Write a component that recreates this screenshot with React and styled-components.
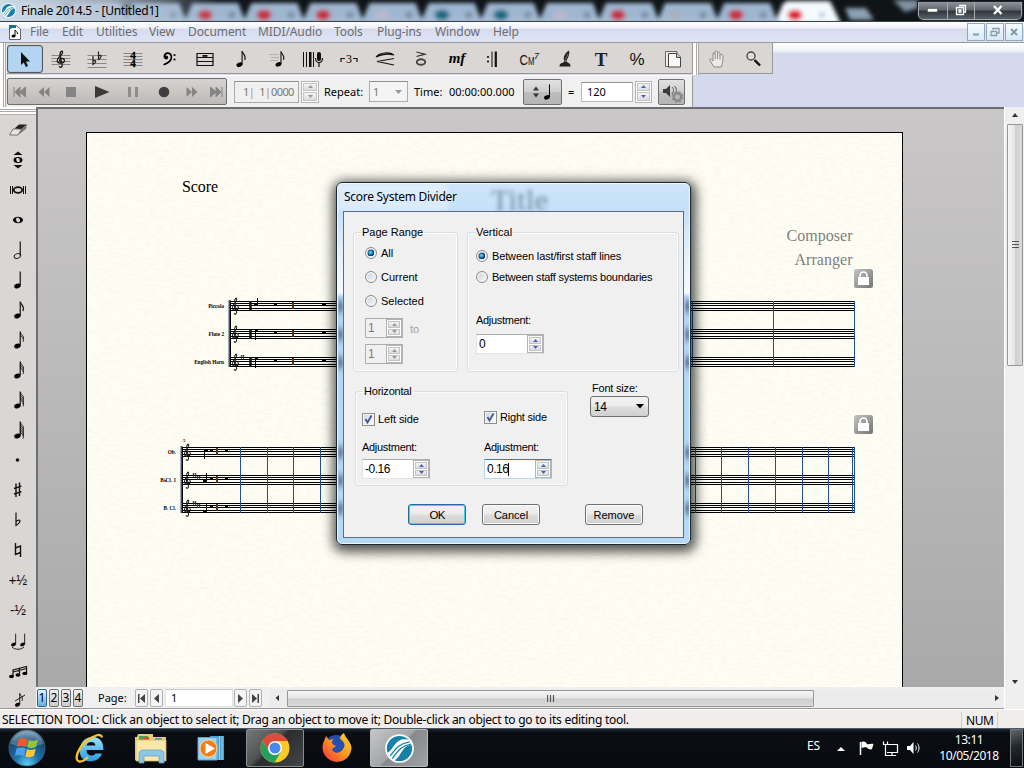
import React from 'react';
import styled, { createGlobalStyle, css } from 'styled-components';

const UI = "'Noto Sans', 'Open Sans', sans-serif";
const SANS = "'Liberation Sans', Arial, sans-serif";
const SERIF = "'Liberation Serif', 'Times New Roman', serif";

const Global = createGlobalStyle`
  * { box-sizing: border-box; }
  body { margin: 0; background: #000; overflow: hidden; }
  svg { display: block; flex: none; }
`;

const Screen = styled.div`
  position: relative;
  width: 1024px;
  height: 768px;
  display: flex;
  flex-direction: column;
  overflow: hidden;
  font-family: ${UI};
  font-size: 12px;
  color: #000;
  background: #f0f0f0;
`;

const Label = styled.span`
  white-space: pre;
  flex: none;
  font-family: ${(p) => p.$font || UI};
  font-size: ${(p) => p.$size || 12}px;
  line-height: ${(p) => p.$lh || 16}px;
  letter-spacing: ${(p) => p.$ls || 0}px;
  color: ${(p) => p.$color || '#000'};
  width: ${(p) => (p.$w ? p.$w + 'px' : 'auto')};
  margin-left: ${(p) => p.$ml || 0}px;
  margin-top: ${(p) => p.$mt || 0}px;
`;

/* ---------- title bar ---------- */
const TitleBar = styled.header`
  position: relative;
  height: 22px;
  flex: none;
  display: flex;
  align-items: center;
  padding-left: 1px;
  overflow: hidden;
  border-bottom: 1px solid #3b4147;
`;
const Backdrop = styled.div`
  position: absolute;
  inset: 0;
`;
const TitleContent = styled.div`
  position: relative;
  display: flex;
  align-items: center;
  gap: 5px;
  width: 100%;
`;
const Caption = styled.div`
  margin-left: auto;
  margin-right: 2px;
  align-self: flex-start;
  display: flex;
  height: 18px;
  border: 1px solid #a3a9af;
  border-top: 0;
  border-radius: 0 0 5px 5px;
  background: linear-gradient(#8d949b 0, #60666d 8px, #30363c 9px, #596067 17px);
  outline: 1px solid #20262c;
`;
const CaptionBtn = styled.div`
  width: ${(p) => p.$w}px;
  display: flex;
  align-items: center;
  justify-content: center;
  & + & { border-left: 1px solid #a3a9af; }
`;

/* ---------- menu ---------- */
const MenuBar = styled.nav`
  height: 20px;
  flex: none;
  display: flex;
  align-items: center;
  padding-left: 8px;
  background: linear-gradient(#fdfdff 0, #f1f3fa 6px, #d6dbef 7px, #e0e5f5 20px);
`;
const MdiButtons = styled.div`
  margin-left: auto;
  margin-right: 1px;
  display: flex;
  gap: 1px;
`;
const MdiBtn = styled.div`
  width: 18px;
  height: 18px;
  border: 1px solid #91a7bd;
  background: linear-gradient(#f6fbff, #d8eaf6);
  display: flex;
  align-items: center;
  justify-content: center;
`;

/* ---------- toolbars ---------- */
const Rebar = styled.div`
  height: 65px;
  flex: none;
  border-top: 1px solid #9a9a9a;
  background: linear-gradient(#ffffff 0, #f2f4fa 7px, #e9ecf7 9px, #d4d9ed 10px);
`;
const Band = styled.div`
  display: flex;
  height: ${(p) => p.$h}px;
  align-items: stretch;
`;
const Grip = styled.div`
  width: ${(p) => p.$w || 7}px;
  flex: none;
  background: linear-gradient(90deg, #fff 0 3px, #a8a8a8 3px 4px, #fff 4px 5px, #a8a8a8 5px 6px, #e9e8e7 6px);
`;
const ToolStrip = styled.div`
  display: flex;
  height: 31px;
  width: ${(p) => p.$w}px;
  padding: 2px 0;
  background: #dad6d3;
  border-bottom: 1px solid #999;
  border-right: 1px solid #999;
`;
const ToolBtn = styled.div`
  width: ${(p) => p.$w || 36}px;
  height: 28px;
  flex: none;
  display: flex;
  align-items: center;
  justify-content: center;
  border-radius: 3px;
  ${(p) => p.$on && css`
    background: #b3d4f2;
    border: 1px solid #555;
    box-shadow: inset 0 0 1px #666;
  `}
`;
const PlayStrip = styled.div`
  display: flex;
  align-items: center;
  width: 686px;
  height: 32px;
  background: #f0f0f0;
  border-right: 1px solid #999;
  border-top: 1px solid #fff;
`;
const Transport = styled.div`
  display: flex;
  align-items: center;
  width: 220px;
  height: 27px;
  border: 1px solid #6d6d6d;
  border-radius: 2px;
  background: linear-gradient(#d6d3d1, #bdb9b7);
`;
const Box = styled.div`
  display: flex;
  align-items: center;
  width: ${(p) => p.$w}px;
  height: ${(p) => p.$h}px;
  margin-left: ${(p) => p.$ml || 0}px;
  padding-left: ${(p) => p.$pl ?? 3}px;
  background: ${(p) => p.$bg || '#fff'};
  border: 1px solid ${(p) => p.$bc || '#b5b8bd'};
  border-top-color: ${(p) => p.$tc || '#8f949a'};
  flex: none;
`;
const DarkBtn = styled.div`
  display: flex;
  align-items: center;
  justify-content: center;
  width: ${(p) => p.$w}px;
  height: 26px;
  margin-left: ${(p) => p.$ml}px;
  border: 1px solid #707070;
  border-radius: 2px;
  background: linear-gradient(#e2e2e2, #cfcfcf 48%, #bdbdbd 52%, #b5b5b5);
`;
const SpinBox = styled.div`
  display: flex;
  flex-direction: column;
  gap: 1px;
  width: ${(p) => p.$w || 17}px;
  height: ${(p) => p.$h || 20}px;
  margin-left: ${(p) => p.$ml || 0}px;
  padding: 1px;
  border: 1px solid #b4b4b4;
  background: #fff;
  flex: none;
`;
const SpinHalf = styled.div`
  flex: 1;
  border: 1px solid #c3c3c3;
  background: linear-gradient(#f4f4f4, #dcdcdc);
  display: flex;
  align-items: center;
  justify-content: center;
`;
function Spin({ color = '#4a62b8', ...rest }) {
  return (
    <SpinBox {...rest}>
      <SpinHalf><svg width="5" height="3"><path d="M0 3L2.5 0L5 3z" fill={color} /></svg></SpinHalf>
      <SpinHalf><svg width="5" height="3"><path d="M0 0L2.5 3L5 0z" fill={color} /></svg></SpinHalf>
    </SpinBox>
  );
}

/* ---------- workspace ---------- */
const Workspace = styled.div`
  display: flex;
  height: 602px;
  flex: none;
`;
const Palette = styled.aside`
  width: 36px;
  height: 602px;
  flex: none;
  overflow: hidden;
  background: #dad6d3;
  border-bottom: 1px solid #999;
`;
const PaletteGrip = styled.div`
  height: 8px;
  background: linear-gradient(#fff 0 2px, #a8a8a8 2px 3px, #fff 3px 4px, #a8a8a8 4px 5px, #fff 5px 7px, #b5b5b5 7px);
`;
const PaletteCell = styled.div`
  height: 30px;
  padding-right: 1px;
  display: flex;
  align-items: center;
  justify-content: center;
`;
const DocColumn = styled.div`
  width: 968px;
  flex: none;
  display: flex;
  flex-direction: column;
`;
const Canvas = styled.main`
  position: relative;
  height: 580px;
  overflow: hidden;
  border-left: 2px solid #6e6e6e;
  border-top: 2px solid #6e6e6e;
  background: linear-gradient(#c9c7c8, #aaa9aa);
`;
const Paper = styled.div`
  position: absolute;
  left: 48px;
  top: 23px;
  width: 817px;
  height: 560px;
  border: 1px solid #000;
  background: #fefef5;
`;
const ScoreArt = styled.svg`
  position: absolute;
  left: -87px;
  top: -133px;
`;
const BottomBar = styled.div`
  height: 22px;
  display: flex;
  align-items: center;
  padding: 1px 0 0 1px;
  background: #f0f0f0;
  border-bottom: 1px solid #999;
  & > * { flex-shrink: 0; }
`;
const LayerBtn = styled.div`
  width: 10px;
  height: 18px;
  margin-right: 2px;
  border: 1px solid ${(p) => (p.$on ? '#2c628b' : '#707070')};
  border-radius: 2px;
  background: ${(p) => (p.$on ? 'linear-gradient(#e5f4fc, #98d1ef 50%, #68b3db)' : 'linear-gradient(#f2f2f2, #ddd 50%, #cfcfcf)')};
  font-size: 12px;
  line-height: 16px;
  text-align: center;
  display: flex;
  justify-content: center;
`;
const NavBtn = styled.div`
  width: 13px;
  height: 18px;
  margin-left: ${(p) => p.$ml || 0}px;
  margin-right: ${(p) => p.$mr || 2}px;
  border: 1px solid #adb2b5;
  border-radius: 2px;
  background: #f4f4f4;
  display: flex;
  align-items: center;
  justify-content: center;
`;
const HScroll = styled.div`
  width: 734px;
  height: 18px;
  display: flex;
  align-items: center;
  background: #ececec;
`;
const HThumb = styled.div`
  width: 527px;
  height: 17px;
  margin-left: 6px;
  border: 1px solid #979797;
  border-radius: 1px;
  background: linear-gradient(#f5f5f5, #e6e6e6 48%, #cfcfcf 52%, #dadada);
  display: flex;
  align-items: center;
  justify-content: center;
`;
const VScroll = styled.div`
  width: 20px;
  height: 602px;
  padding: 5px 1px 24px 2px;
  background: #efefef;
  border-left: 1px solid #fff;
  display: flex;
  flex-direction: column;
  align-items: center;
`;
const VThumb = styled.div`
  width: 16px;
  height: 242px;
  margin-top: 6px;
  margin-bottom: auto;
  border: 1px solid #979797;
  border-radius: 1px;
  background: linear-gradient(90deg, #f5f5f5, #e6e6e6 48%, #cfcfcf 52%, #dadada);
  display: flex;
  align-items: center;
  justify-content: center;
`;
const StatusBar = styled.footer`
  height: 19px;
  flex: none;
  display: flex;
  align-items: center;
  padding: 2px 0 0 2px;
  background: #f1edec;
  border-top: 1px solid #fff;
`;
const StatusCell = styled.div`
  margin-left: auto;
  margin-right: 26px;
  width: 37px;
  padding-left: 4px;
  border-left: 1px solid #cfcbca;
  border-right: 1px solid #cfcbca;
`;

/* ---------- taskbar ---------- */
const Taskbar = styled.div`
  flex: none;
  height: 40px;
  display: flex;
  align-items: center;
  background: linear-gradient(#4b5a66 0 1px, #1d262d 1px, #0a0e13 5px, #070a10 100%);
`;
const Task = styled.div`
  width: ${(p) => p.$w || 62}px;
  height: 38px;
  flex: none;
  display: flex;
  align-items: center;
  justify-content: center;
  ${(p) => p.$state && css`
    border: 1px solid ${p.$state === 'active' ? '#b9bbbd' : '#8a8c8e'};
    border-radius: 2px;
    background: ${p.$state === 'active'
      ? 'linear-gradient(135deg, #c5c6c7 0%, #a3a4a6 48%, #88898b 50%, #9fa0a2 100%)'
      : 'linear-gradient(135deg, #77787a 0%, #515254 40%, #2b2c2e 48%, #454648 100%)'};
  `}
`;
const Tray = styled.div`
  margin-left: auto;
  display: flex;
  align-items: center;
  height: 40px;
`;
const Clock = styled.div`
  width: 70px;
  margin-left: 9px;
  display: flex;
  flex-direction: column;
  align-items: center;
`;
const ShowDesktop = styled.div`
  width: 13px;
  height: 38px;
  margin: 0 1px 0 6px;
  border: 1px solid #73777b;
  background: linear-gradient(160deg, #62676b, #23282d 45%, #0b0f13);
`;

/* ---------- dialog ---------- */
const Dialog = styled.section`
  position: absolute;
  left: 336px;
  top: 182px;
  width: 355px;
  height: 363px;
  padding: 0 6px 6px;
  border: 1px solid #1d2630;
  border-radius: 6px;
  background: linear-gradient(#cfe5f9 0, #c5e0f8 28px, #e6f2fc 75px, #f4f9fe 110px, #b4d6f6 114px, #b7d9f8 100%);
  box-shadow: inset 0 0 0 1px rgba(255,255,255,.75), 1px 3px 12px 4px rgba(0,0,0,.68);
`;
const FrameSmudges = styled.svg`
  position: absolute;
  left: 1px;
  top: 1px;
`;
const DialogTitle = styled.div`
  position: relative;
  height: 28px;
  padding-top: 5px;
  padding-left: 1px;
`;
const Client = styled.div`
  position: relative;
  width: 341px;
  height: 327px;
  border: 1px solid #5c6d80;
  background: #f0f0f0;
  padding: 20px 4px 0 9px;
  font-family: ${SANS};
`;
const Row = styled.div`
  display: flex;
  align-items: ${(p) => p.$align || 'flex-start'};
  margin-top: ${(p) => p.$mt || 0}px;
  padding-left: ${(p) => p.$pl || 0}px;
`;
const Group = styled.div`
  position: relative;
  width: ${(p) => p.$w}px;
  height: ${(p) => p.$h}px;
  margin-left: ${(p) => p.$ml || 0}px;
  padding: ${(p) => p.$pad};
  border: 1px solid #d5dfe5;
  border-radius: 3px;
  box-shadow: inset 0 0 0 1px #fbfbfb;
  flex: none;
`;
const Legend = styled.div`
  position: absolute;
  left: 7px;
  top: -8px;
  height: 14px;
  padding: 0 1px;
  background: #f0f0f0;
  font-size: 11px;
  line-height: 15px;
  letter-spacing: ${(p) => p.$ls || 0}px;
  white-space: nowrap;
`;
const Option = styled.div`
  display: flex;
  align-items: center;
  gap: ${(p) => p.$gap || 4}px;
  height: 14px;
  margin-top: ${(p) => p.$mt || 0}px;
`;
const RadioDot = styled.span`
  width: 12px;
  height: 12px;
  border-radius: 50%;
  border: 1px solid #8a8f94;
  box-shadow: inset 0 0 0 1.5px #f4f4f4;
  background: ${(p) => (p.$on
    ? 'radial-gradient(circle at 45% 45%, #8fdcff 0, #1c7ab8 2px, #0c3556 3.6px, #e6e6e6 4px)'
    : 'linear-gradient(135deg, #c5c9cd, #fff)')};
`;
const CheckBox = styled.span`
  width: 13px;
  height: 13px;
  border: 1px solid #8e8f8f;
  background: linear-gradient(135deg, #cfd4da, #fff);
  box-shadow: inset 0 0 0 1px #f4f4f4;
`;
const Column = styled.div`
  display: flex;
  flex-direction: column;
  width: ${(p) => p.$w ? p.$w + 'px' : 'auto'};
  margin-left: ${(p) => p.$ml || 0}px;
  margin-top: ${(p) => p.$mt || 0}px;
`;
const Combo = styled.div`
  width: 59px;
  height: 21px;
  padding: 0 4px 0 3px;
  border: 1px solid #707070;
  border-radius: 3px;
  background: linear-gradient(#f2f2f2, #ebebeb 48%, #dddddd 52%, #cfcfcf);
  display: flex;
  align-items: center;
  justify-content: space-between;
`;
const Button = styled.div`
  width: 58px;
  height: 21px;
  margin-left: ${(p) => p.$ml || 0}px;
  border: 1px solid ${(p) => (p.$primary ? '#2c6a94' : '#707070')};
  border-radius: 3px;
  background: linear-gradient(#f2f2f2, #ebebeb 48%, #dddddd 52%, #cfcfcf);
  box-shadow: ${(p) => (p.$primary ? 'inset 0 0 0 1px #47cdf3' : 'inset 0 0 0 1px #fafafa')};
  display: flex;
  align-items: center;
  justify-content: center;
`;

function Radio({ on, mt, ls, children }) {
  return (
    <Option $mt={mt}>
      <RadioDot $on={on} />
      <Label $font={SANS} $size={11} $lh={14} $ls={ls}>{children}</Label>
    </Option>
  );
}
function Check({ children, ls }) {
  return (
    <Option $gap={3}>
      <CheckBox>
        <svg width="11" height="11"><path d="M2.5 5L4.5 8.5L8.5 1.5" fill="none" stroke="#42559c" strokeWidth="1.8" /></svg>
      </CheckBox>
      <Label $font={SANS} $size={11} $lh={14} $ls={ls}>{children}</Label>
    </Option>
  );
}
const FieldWrap = styled.div`
  display: flex;
  width: ${(p) => p.$w}px;
  height: 20px;
  margin-top: ${(p) => p.$mt || 0}px;
  padding: 0 0 0 2px;
  align-items: center;
  background: ${(p) => (p.$off ? '#f0f0f0' : '#fff')};
  border: 1px solid ${(p) => (p.$focus ? '#b7d9ed' : p.$off ? '#afafaf' : '#e3e3ea')};
  border-top-color: ${(p) => (p.$focus ? '#3d7bad' : '#abadb3')};
  border-right-color: #b4b4b4;
  font-family: ${SANS};
  & > :last-child { margin-left: auto; }
`;
const Caret = styled.span`
  width: 1px;
  height: 13px;
  background: #000;
`;
function NumField({ w = 68, mt, off, focus, children }) {
  return (
    <FieldWrap $w={w} $mt={mt} $off={off} $focus={focus}>
      <Label $font={SANS} $size={12} $lh={16} $ls={-0.5} $color={off ? '#7a7a7a' : '#000'}>{children}</Label>
      {focus && <Caret />}
      <div><Spin $w={16} $h={18} color={off ? '#999' : '#4a62b8'} /></div>
    </FieldWrap>
  );
}

/* ---------- drawings ---------- */
const Icon = ({ w = 32, h = 28, children }) => (
  <svg width={w} height={h} viewBox={`${-w / 2} ${-h / 2} ${w} ${h}`} fill="none" stroke="none">{children}</svg>
);
const Lines = ({ ys, w = 9.5, c = '#888' }) => <path d={ys.map((y) => `M${-w} ${y}H${w}`).join('')} stroke={c} strokeWidth="1" />;
const TREBLE = 'M-2 7.6C-1 9.5 1.8 8.8 1.2 6L-1 -4.5C-1.4 -7.5 1.3 -9.6 1.7 -7.2C2 -4.2 -4 -2 -4 1.8C-4 5.2 3.6 5.4 3.6 1.6C3.6 -1.6 -1.8 -1.4 -1.5 1.4C-1.4 2.4 -.8 2.9 0 3';
const BASS = 'M-4.6 -1.6C-5.6 -7 2.8 -7.4 2.4 -1.6C2.2 2.4 -2 4.6 -5.4 5.8';

function Note({ flags = 0, open, x = 0, s = 1 }) {
  const f = [];
  for (let i = 0; i < flags; i += 1) {
    const y = -8 + i * 2.3;
    f.push(<path key={i} d={`M2.4 ${y}C2.8 ${y + 3} 6.8 ${y + 3.6} 5 ${y + (flags > 1 ? 7.5 : 9)}`} stroke="#111" strokeWidth={flags > 1 ? 0.9 : 1.2} />);
  }
  return (
    <g transform={`translate(${x} 0) scale(${s})`}>
      <ellipse cx="-.6" cy="6" rx="3.3" ry="2.3" transform="rotate(-22 -.6 6)" fill={open ? 'none' : '#000'} stroke="#222" strokeWidth={open ? 1 : 0} />
      <path d="M2.2 5.6V-8.4" stroke="#000" strokeWidth="1.1" />
      {f}
    </g>
  );
}
const Whole = ({ y = 0, s = 1 }) => (
  <g transform={`translate(0 ${y}) scale(${s})`}>
    <ellipse rx="5" ry="3.3" fill="#000" />
    <ellipse rx="1.9" ry="2.6" transform="rotate(-25)" fill="#dad6d3" />
  </g>
);

const TOOLS = [
  <path d="M-4 -7V6L-1.2 3.4L.8 8L3 7L1 2.6H5z" fill="#111" />,
  <><Lines ys={[-3.5, -.5, 2.5, 5.5]} /><path d={TREBLE} transform="scale(.95)" stroke="#111" strokeWidth="1.3" /></>,
  <><Lines ys={[-3.5, .5, 4.5, 8.5]} /><path d="M-4 -3V5.500C-.5 3.500 -.5 .5 -4 2M1.500 -7.500V.5C5 -1.500 5 -5 1.500 -3" stroke="#222" strokeWidth="1.200" /></>,
  <><Lines ys={[-5.5, -2.5, .5, 3.500, 6.5]} /><text textAnchor="middle" fontFamily={SERIF} fontWeight="bold" fontSize="11" fill="#000" stroke="#000" strokeWidth=".3"><tspan x="0" y="0">4</tspan><tspan x="0" y="8">4</tspan></text></>,
  <><path d={BASS} stroke="#000" strokeWidth="1.700" /><circle cx="-2.900" cy="-1.600" r="2" fill="#000" /><circle cx="5.500" cy="-4" r="1.100" fill="#000" /><circle cx="5.500" cy=".5" r="1.100" fill="#000" /></>,
  <><path d="M-8 -5.500H8M-8 -1.500H8M-8 2.500H8M-8 6.500H8M-8 -6V7M8 -6V7" stroke="#111" strokeWidth="1.2" /><rect x="-2.500" y="-4" width="5" height="1.800" fill="#111" /></>,
  <Note flags={1} s={0.95} x={-1} />,
  <><Note flags={1} x={2} s={0.9} /><path d="M-8 -4.500H2M-6 -1.500H2M-7 1.500H1" stroke="#b0b0b0" strokeWidth="1" /></>,
  <><path d="M-9.500 -7V8M-6.500 -7V8M.5 -7V8" stroke="#111" /><path d="M-4 -7H-1.500V8H-4z" fill="#111" /><rect x="4" y="-7" width="4" height="9" rx="2" fill="#111" /><path d="M2.500 -1C2.500 5 9.500 5 9.500 -1M6 4V8" stroke="#111" strokeWidth="1.200" /></>,
  <><text x="0" y="4" textAnchor="middle" fontFamily={SERIF} fontSize="12" fill="#000">3</text><path d="M-8 3V-.5H-4M8 3V-.5H4" stroke="#111" strokeWidth="1.200" /></>,
  <><path d="M-9 -2C-5 -7 5 -7 9 -4C4 -5.500 -4 -5 -9 -2M9 -.5L-8 2.500L9 6" stroke="#111" strokeWidth="1.200" /></>,
  <><path d="M-4.500 -7L4 -4.800L-4.500 -2.500" stroke="#333" strokeWidth="1.200" /><ellipse cy="3" rx="4.200" ry="2.800" stroke="#444" strokeWidth="1.900" /></>,
  <text y="4" textAnchor="middle" fontFamily={SERIF} fontStyle="italic" fontWeight="bold" fontSize="15" fill="#000">mf</text>,
  <><circle cx="-5" cy="-2" r="1.100" fill="#111" /><circle cx="-5" cy="2.500" r="1.100" fill="#111" /><path d="M-1 -7.500V8" stroke="#111" /><path d="M2.800 -7.500V8" stroke="#111" strokeWidth="2.200" /></>,
  <g fontFamily={SANS} fill="#111"><text x="-9.500" y="6" fontSize="15" textLength="8.500" lengthAdjust="spacingAndGlyphs">C</text><text x="-1" y="6" fontSize="10" textLength="6.500" lengthAdjust="spacingAndGlyphs">M</text><text x="5" y="0" fontSize="9" fontStyle="italic">7</text></g>,
  <><path d="M-5.500 7.500C-5.500 3 -1 4.500 -1 2.500H2C2 4.500 5.500 3 5.500 7.500z" fill="#222" /><path d="M-.5 2.500C-3 -2 1 -7 4 -8.500C5 -5 3 -1 1 2.500z" fill="#222" /><path d="M0 2L3 -5" stroke="#999" strokeWidth=".7" /></>,
  <text y="7" textAnchor="middle" fontFamily={SERIF} fontWeight="bold" fontSize="19" fill="#222">T</text>,
  <text y="6" textAnchor="middle" fontFamily={SANS} fontSize="17" fill="#111">%</text>,
  <><path d="M-7.500 -7.500H4V7.500H-7.500z" fill="#eee" stroke="#666" /><path d="M-4.500 -5.500H4L7.500 -2V8H-4.500z" fill="#f8f8f8" stroke="#444" /><path d="M3.500 -5.500V-1.500H7.500" fill="#ccc" stroke="#444" /></>,
];

const TRANSPORT = [
  [24, <path d="M-6 -5V5M-5 0L0 -5V5zM0 0L5.500 -5V5z" fill="#858585" stroke="#858585" />],
  [24, <path d="M-5.500 0L0 -5V5zM0 0L5.500 -5V5z" fill="#858585" />],
  [30, <rect x="-5" y="-5" width="10" height="10" fill="#858585" />],
  [32, <path d="M-7 -6L7.500 0L-7 6z" fill="#3a3a3a" />],
  [30, <path d="M-5 -5H-2V5H-5zM2 -5H5V5H2z" fill="#8d8d8d" />],
  [32, <circle r="5.300" fill="#3f3f3f" />],
  [24, <path d="M5.500 0L0 -5V5zM0 0L-5.500 -5V5z" fill="#858585" />],
  [23, <path d="M6 -5V5M5 0L0 -5V5zM0 0L-5.500 -5V5z" fill="#858585" stroke="#858585" />],
];

const glyph = (t) => <text y="5" textAnchor="middle" fontFamily={SANS} fontSize="15" fill="#111" textLength={t[0] === '+' ? 18.5 : 16} lengthAdjust="spacingAndGlyphs">{t}</text>;
const PALETTE = [
  <><path d="M-8.500 5L-5 -1H3.500L0 5z" fill="#e5e5e5" stroke="#777" /><path d="M-3.500 -1.500L1 -5.500H9L3.500 -1z" fill="#222" /><path d="M3.500 -1L9 -5.500L8 -1L0 5z" fill="#777" /></>,
  <><Whole s={0.9} /><path d="M-4.500 -5L0 -8.500L4.500 -5zM-4.500 5L0 8.500L4.500 5z" fill="#111" /></>,
  <><path d="M-7.500 -4V4M-5.500 -4V4M7.500 -4V4M5.500 -4V4" stroke="#111" /><ellipse rx="4.200" ry="2.800" stroke="#111" strokeWidth="1.800" /></>,
  <Whole />,
  <Note open />, <Note />, <Note flags={1} />, <Note flags={2} />, <Note flags={3} />, <Note flags={4} />, <Note flags={5} />,
  <circle r="1.800" cy="0" cx="-.5" fill="#111" />,
  <path d="M-2 -6.500V7M1.500 -7.500V6M-4 -1.500L3.500 -3.800M-4 4L3.500 1.700" stroke="#111" strokeWidth="1.400" />,
  <path d="M-2 -7.500V5.500C3.500 2 3 -2 -2 1.500" stroke="#111" strokeWidth="1.200" />,
  <path d="M-2.500 -7V4.500L2.500 2.500M2.500 7V-4L-2.500 -2" stroke="#111" strokeWidth="1.400" />,
  glyph('+½'), glyph('-½'),
  <><Note x={-4} s={0.75} /><Note x={5} s={0.75} /><path d="M-6 7C-3 10 3 10 6 7" stroke="#222" /></>,
  <><text x="0" y="-3.500" textAnchor="middle" fontFamily={SANS} fontSize="7" fontStyle="italic">3</text><path d="M-5 6V0L8.500 -3.500V3M1.500 4.500V-1.500M-5 2L8.500 -1.500" stroke="#111" strokeWidth="1.200" /><g fill="#000"><ellipse cx="-6.500" cy="6.500" rx="2.500" ry="1.800" /><ellipse cx="0" cy="5" rx="2.500" ry="1.800" /><ellipse cx="6.800" cy="3.500" rx="2.500" ry="1.800" /></g></>,
  <><Note flags={1} s={0.8} /><path d="M-3 1L7 -5" stroke="#222" /></>,
];

function FinaleLogo({ r = 8 }) {
  return (
    <svg width={r * 2} height={r * 2} viewBox="-10 -10 20 20">
      <circle r="9.900" fill="#f3fafc" />
      <circle r="8.700" fill="#1680a6" />
      <path d="M-8.500 3C-5 2 -4 -4 1 -6C4 -7 6 -5.500 8 -6L9 -2.500C3 -2.500 2 2 -1 6L-4 9L-6 7z" fill="#fff" />
      <path d="M-6.500 5C-3.500 2 -2 -3 7 -4.500M-5 7C-1 2 0 -1.500 8 -3" stroke="#1680a6" strokeWidth=".9" fill="none" />
    </svg>
  );
}

function TitleBackdrop() {
  const dots = [[87, '#d3606b', .15], [146, '#d3606b', .3], [205, '#c4303f', 1], [264, '#c4303f', 1], [323, '#c4303f', 1], [382, '#c9b8cc', .6], [442, '#176a86', 1], [501, '#176a86', 1], [560, '#c9b8cc', .6], [618, '#c4303f', 1], [676, '#b9a99f', .4], [736, '#c4303f', 1]];
  return (
    <svg width="1024" height="21">
      <defs>
        <filter id="tb" x="-5%" y="-50%" width="110%" height="200%"><feGaussianBlur stdDeviation="2.200" /></filter>
        <linearGradient id="haze" x1="0" x2="1"><stop offset="0" stopColor="#cfdbe8" /><stop offset=".5" stopColor="#bccbdc" stopOpacity=".8" /><stop offset="1" stopColor="#a9bdd3" stopOpacity="0" /></linearGradient>
      </defs>
      <rect width="1024" height="21" fill="#0f1417" />
      <g filter="url(#tb)">
        {Array.from({ length: 14 }, (_, i) => 11 + i * 59.100).map((x, i) => (
          <path key={x} d={`M${x - 5} 24L${x + 4} 3H${x + 50}L${x + 58} 24z`} fill={i === 13 ? '#f4fbff' : '#9fb6d0'} />
        ))}
        <path d="M778 24L786 1H830L841 24z" fill="#f4fbff" />
        <path d="M845 8H866L874 20H850z" fill="#8ba0b3" />
        <path d="M893 0H918V8L905 12z" fill="#8193a2" />
        <rect y="19" width="780" height="5" fill="#a9bfd8" />
        {dots.map(([x, c, o]) => <ellipse key={x} cx={x} cy="15" rx="7.500" ry="5.500" fill={c} opacity={o} />)}
        {dots.map(([x]) => <circle key={x} cx={x + 27} cy="15" r="3.500" fill="#778ca2" />)}
        <ellipse cx="795" cy="15" rx="7.500" ry="5.500" fill="#e02238" />
        <circle cx="822" cy="15" r="3" fill="#b5cce0" />
      </g>
      <rect width="220" height="21" fill="url(#haze)" />
    </svg>
  );
}

function Staves({ left, top, bars, names, clefSharps }) {
  return (
    <g>
      {[0, 28, 56].map((o, i) => (
        <g key={o}>
          <path d={[0, 2, 4, 7, 9].map((d) => `M${left} ${top + o + d + .5}H855`).join('')} stroke="#000" strokeWidth="1" />
          <path d={TREBLE} transform={`translate(${left + 5.500} ${top + o + 5}) scale(.78 .95)`} fill="none" stroke="#111" strokeWidth="1.200" />
          <text x={left - 6} y={top + o + 6.500} textAnchor="end" fontFamily={SERIF} fontWeight="bold" fontSize="5.200" fill="#000">{names[i]}</text>
          {clefSharps[i] > 0 && <path d={`M${left + 11.500} ${top + o - 2}v4m2 -4v4m-3 -3h4`} stroke="#333" strokeWidth=".8" />}
          {clefSharps[i] > 1 && <path d={`M${left + 15.500} ${top + o + 1}v4m2 -4v4m-3 -3h4`} stroke="#333" strokeWidth=".8" />}
        </g>
      ))}
      <path d={bars.map((x) => `M${x + .5} ${top}V${top + 66}`).join('')} stroke="#24508f" />
      <path d={`M${left - .5} ${top - 1}V${top + 66}`} stroke="#3b5878" strokeWidth="2" />
      <path d={`M${left + .5} ${top}V${top + 66}`} stroke="#000" />
    </g>
  );
}

function Lock({ y }) {
  return (
    <g transform={`translate(854 ${y})`}>
      <rect width="19" height="19" rx="2.500" fill="url(#lockFill)" />
      <rect x="4" y="8" width="11" height="8" fill="#fff" />
      <path d="M6 9V6.500a3.500 3.500 0 0 1 7 0V9" fill="none" stroke="#fff" strokeWidth="1.600" />
    </g>
  );
}

function Score() {
  return (
    <ScoreArt width="904" height="700">
      <defs>
        <linearGradient id="lockFill" x1="0" y1="0" x2="1" y2="1"><stop offset="0" stopColor="#c4c4c4" /><stop offset="1" stopColor="#747474" /></linearGradient>
        <filter id="paperGrain" x="0" y="0" width="1" height="1">
          <feTurbulence type="fractalNoise" baseFrequency=".14 .38" numOctaves="3" seed="4" />
          <feColorMatrix values="0 0 0 0 .62  0 0 0 0 .6  0 0 0 0 .42  0 0 0 .9 -.34" />
        </filter>
      </defs>
      <rect x="87" y="133" width="816" height="560" filter="url(#paperGrain)" opacity=".25" />
      <g fontFamily={SERIF}>
        <text x="182" y="192" fontSize="16" textLength="36">Score</text>
        <text x="852.500" y="241" fontSize="16" textAnchor="end" fill="#808080" textLength="66">Composer</text>
        <text x="852.500" y="265" fontSize="16" textAnchor="end" fill="#808080" textLength="58">Arranger</text>
        <text x="183" y="442" fontSize="5" fontWeight="bold">5</text>
      </g>
      <Staves left={230} top={301} bars={[692, 773, 854]} names={['Piccolo', 'Flute 2', 'English Horn']} clefSharps={[0, 0, 1]} />
      <Staves left={182} top={447} bars={[240, 267, 293, 320, 695, 721, 748, 775, 802, 828, 852, 854]} names={['Ob.', 'B♭Cl. 1', 'B. Cl.']} clefSharps={[0, 2, 2]} />
      <path d="M250.500 301v10M250.500 329v10M250.500 357v10" stroke="#111" strokeWidth="2.500" />
      <path d="M257.500 298v8M255.500 329v11M255.500 357v11M204.500 450v9M206.500 473v8M206.500 504v9" stroke="#000" />
      <path d="M254 305h4M255 330h3M255 358h3M204 451h4M203 481h4M203 512h4" stroke="#000" strokeWidth="1.800" />
      <path d="M274 304.500h3M274 332.500h3M274 360.500h3M322 304.500h4M322 332.500h4M322 360.500h4M210 450.500h3M210 478.500h3M210 506.500h3M225 450.500h3M225 478.500h3M225 506.500h3" stroke="#000" strokeWidth="2" />
      <path d="M293 302v7M293 330v7M293 358v7M217 448v7M217 476v7M217 504v7" stroke="#5c3410" strokeWidth="2" />
      <Lock y={269} />
      <Lock y={415} />
    </ScoreArt>
  );
}

function Smudges() {
  return (
    <FrameSmudges width="351" height="359">
      <defs><filter id="sm" x="-30%" y="-30%" width="160%" height="160%"><feGaussianBlur stdDeviation="1 3.500" /></filter><filter id="sm2"><feGaussianBlur stdDeviation="2" /></filter></defs>
      <path d="M0 0H110V27H0z" fill="#fff" opacity=".35" filter="url(#sm2)" />
      <text x="153" y="26" fontFamily={SERIF} fontSize="30" fill="#4c6376" opacity=".7" filter="url(#sm2)" textLength="57">Title</text>
      <g fill="#405a75" opacity=".72" filter="url(#sm)">
        {[117, 145, 173, 263, 291, 319].map((y) => (
          <React.Fragment key={y}><rect x="0" y={y} width="5" height="11" /><rect x="347" y={y} width="5" height="11" /></React.Fragment>
        ))}
      </g>
    </FrameSmudges>
  );
}

function StartOrb() {
  return (
    <svg width="40" height="38" viewBox="-20 -19 40 38">
      <defs><radialGradient id="orb" cx=".5" cy=".95" r=".95"><stop offset="0" stopColor="#5fd0f5" /><stop offset=".35" stopColor="#1d73ad" /><stop offset=".75" stopColor="#174a74" /><stop offset="1" stopColor="#7ea2bd" /></radialGradient></defs>
      <circle r="18" fill="url(#orb)" stroke="#49657b" strokeWidth=".8" />
      <path d="M-16 -4A16.500 16.500 0 0 1 16 -4C8 -1 -8 -1 -16 -4" fill="#fff" opacity=".22" />
      <path d="M-8.500 -8.500C-5 -10.500 -2.500 -10 .5 -8.500L-1 -1C-4 -2.500 -7 -2.500 -10 -1z" fill="#ea5a2a" />
      <path d="M1.800 -8C5 -6.500 8 -7 11 -8.500L9 -1C6 .5 3 .5 .3 -.8z" fill="#8fc63f" />
      <path d="M-10.500 .5C-7 -1 -4 -1 -1.300 .5L-3 8C-6 6.500 -9 6.500 -12 8z" fill="#4aa3e0" />
      <path d="M0 1C3 2.500 6 2 8.700 .8L7 8C4 9.500 1 9.500 -1.700 8.200z" fill="#fbc62f" />
    </svg>
  );
}
const IeIcon = () => (
  <Icon w={32} h={34}>
    <defs><linearGradient id="ie" x2="0" y2="1"><stop stopColor="#9be3fb" /><stop offset="1" stopColor="#259be0" /></linearGradient></defs>
    <path d="M12 5.500C9 14 -2 15.500 -7.500 10.500C-13 4 -10 -10 1.500 -11C11 -11.500 14 -4 13.300 2H-3.500C-3.500 8 3.500 9 5.500 5.500zM-3.500 -2.500H5.500C5 -7.500 -3 -7 -3.500 -2.500" fill="url(#ie)" fillRule="evenodd" />
    <path d="M12 -10.500C11.500 -15 4 -13 -3 -7.500C-12 0 -16.500 12 -11 13.500C-8 14 -5 12 -2 9" stroke="#f7c22c" strokeWidth="2.300" />
  </Icon>
);
const FolderIcon = () => (
  <Icon w={34} h={32}>
    <path d="M-16 -11H-14L-13 -14H2V-11H15V12H-16z" fill="#e9cf7c" />
    <path d="M-12 -12H-3V-8H-12z" fill="#49a34e" /><path d="M-7 -11H-2V-8H-7z" fill="#d9503f" /><path d="M4 -10H11V-7H4z" fill="#4a93cf" />
    <path d="M-15 -8H15V13H-15z" fill="#f8e7a6" stroke="#d8b75b" strokeWidth=".8" />
    <path d="M-12 15V6C-12 3 -10 2 -8 2H9C11 2 13 3 13 6V15H8V8H-7V15z" fill="#8dc7e8" stroke="#5f9fc6" strokeWidth=".7" />
  </Icon>
);
const WmpIcon = () => (
  <Icon w={30} h={30}>
    <path d="M-1 -12H13V12H-1z" fill="#4a9fcd" /><path d="M8.500 -12V12M11 -12V12M6 -11V12" stroke="#b8e2f5" strokeWidth=".8" />
    <path d="M-13 -10.500H6V12H-13z" fill="#9fd2ec" stroke="#5aa4cf" />
    <circle cx="-2.500" cy=".5" r="8.500" fill="#f07d1b" stroke="#ffd39b" /><path d="M-5.500 -5L4 .5L-5.500 6z" fill="#fff" />
  </Icon>
);
const ChromeIcon = () => (
  <Icon w={32} h={32}>
    <circle r="14.500" fill="#fbc928" />
    <path d="M-12.500 -7.300A14.500 14.500 0 0 1 12.700 -7H0L-6.300 3.600z" fill="#de4a3c" />
    <path d="M-12.500 -7.300A14.500 14.500 0 0 0 -.5 14.500L6 3.500L0 7A7 7 0 0 1 -6.200 3.600z" fill="#22a162" />
    <circle r="7" fill="#fff" /><circle r="5.500" fill="#4788ee" />
  </Icon>
);
const FirefoxIcon = () => (
  <Icon w={32} h={32}>
    <defs><linearGradient id="ff" x1="1" x2="0" y2="1"><stop stopColor="#ffe226" /><stop offset=".5" stopColor="#ff9320" /><stop offset="1" stopColor="#f02b42" /></linearGradient></defs>
    <circle cx="-1" cy="-2" r="11" fill="#254fae" />
    <path d="M-13 -7L-11 -12L-8 -8L-3 -9C-7 -6 -5 -3 -1 -2L-5 1C-4 6 3 6 6 1C10 -4 5 -8 3 -9C3 -12 5 -14 7 -15C8 -10 14 -7 14.500 0A14.500 14.500 0 1 1 -13 -7" fill="url(#ff)" />
  </Icon>
);

const MENUS = [['File', 30], ['Edit', 62], ['Utilities', 96], ['View', 149], ['Document', 188], ['MIDI/Audio', 258], ['Tools', 334], ['Plug-ins', 377], ['Window', 435], ['Help', 493]];
const MenuItem = styled.span`
  width: ${(p) => p.$w}px;
  white-space: nowrap;
  color: #6d6d6d;
  font-size: 12px;
  line-height: 18px;
  letter-spacing: -0.1px;
`;

const tick = (d) => <svg width="9" height="9"><path d={d} fill="#444" /></svg>;

export default function App() {
  return (
    <Screen>
      <Global />
      <TitleBar>
        <Backdrop><TitleBackdrop /></Backdrop>
        <TitleContent>
          <FinaleLogo r={7.500} />
          <Label $ls={-0.23}>Finale 2014.5 - [Untitled1]</Label>
          <Caption>
            <CaptionBtn $w={28}><svg width="12" height="6"><rect x=".5" y="1.500" width="10" height="3.500" fill="#fff" stroke="#444" strokeWidth=".5" /></svg></CaptionBtn>
            <CaptionBtn $w={27}><svg width="12" height="12"><path d="M4 1.500H10.500V8H8.500M1.500 3.500H8.500V10.500H1.500zM4 6H6V8H4z" fill="none" stroke="#fff" strokeWidth="1.300" /></svg></CaptionBtn>
            <CaptionBtn $w={47}><svg width="12" height="10"><path d="M2 1L9.500 9M9.500 1L2 9" stroke="#fff" strokeWidth="2.400" /></svg></CaptionBtn>
          </Caption>
        </TitleContent>
      </TitleBar>

      <MenuBar>
        <svg width="22" height="17"><path d="M1.500 1.500H8L12.500 5V15.500H1.500z" fill="#fff" stroke="#666" /><path d="M1 1H8V4H4L1 6z" fill="#127788" /><path d="M7 12V6C8 8 10 8 9.500 10" fill="none" stroke="#111" /><ellipse cx="5.500" cy="12" rx="2" ry="1.500" /></svg>
        {MENUS.map(([t, x], i) => <MenuItem key={t} $w={(MENUS[i + 1] ? MENUS[i + 1][1] : 530) - x}>{t}</MenuItem>)}
        <MdiButtons>
          <MdiBtn><svg width="8" height="8"><path d="M1 6.500H7" stroke="#8799aa" strokeWidth="2" /></svg></MdiBtn>
          <MdiBtn><svg width="10" height="10"><path d="M3 3V1.500H9V6H7M1 4.500H6.500V8.500H1z" fill="none" stroke="#8799aa" strokeWidth="1.300" /></svg></MdiBtn>
          <MdiBtn><svg width="8" height="8"><path d="M1 1L7 7M7 1L1 7" stroke="#8799aa" strokeWidth="2" /></svg></MdiBtn>
        </MdiButtons>
      </MenuBar>

      <Rebar>
        <Band $h={32}>
          <Grip />
          <ToolStrip $w={686}>
            {TOOLS.map((art, i) => <ToolBtn key={i} $on={i === 0}><Icon w={24} h={24}>{art}</Icon></ToolBtn>)}
          </ToolStrip>
          <Grip $w={6} />
          <ToolStrip $w={74}>
            <ToolBtn><Icon w={24} h={24}><path d="M-3 8L-7 1.500C-8 -.5 -5.500 -1 -4 2V-5C-4 -7 -2 -7 -2 -5V-6.500C-2 -8.500 .5 -8.500 .5 -6.500V-5.500C.5 -7.500 3 -7.500 3 -5V-3.500C3.500 -5.500 6 -5 6 -3C6 2 5.500 5 4 8z M-1.800 -5V0M.6 -5.500V0M3 -4V.5" fill="#eceae8" stroke="#8b8b8b" /></Icon></ToolBtn>
            <ToolBtn><Icon w={24} h={24}><circle cx="-2" cy="-3" r="4" stroke="#444" strokeWidth="1.300" fill="#ddd" /><path d="M1.500 1L7 6.500" stroke="#111" strokeWidth="2.400" /></Icon></ToolBtn>
          </ToolStrip>
        </Band>
        <Band $h={32}>
          <Grip />
          <PlayStrip>
            <Transport>
              {TRANSPORT.map(([w, art], i) => <ToolBtn key={i} $w={w}><Icon w={18} h={18}>{art}</Icon></ToolBtn>)}
            </Transport>
            <Box $w={65} $h={22} $ml={7} $pl={8} $bg="#f0f0f0" $bc="#a9a9a9">
              <Label $size={11} $ls={-0.6} $color="#777">1<Label $size={11} $color="#9a9aa8">|</Label>  1<Label $size={11} $color="#c08a50">|</Label>0000</Label>
            </Box>
            <Spin $ml={2} $w={18} $h={22} color="#999" />
            <Label $size={11} $ml={5} $w={45}>Repeat:</Label>
            <Box $w={39} $h={21} $bg="#f4f4f4" $bc="#adadad">
              <Label $size={11} $color="#777" $w={22}>1</Label>
              <svg width="7" height="4"><path d="M0 0H7L3.500 4z" fill="#999" /></svg>
            </Box>
            <Label $size={11} $ml={6} $w={35}>Time:</Label>
            <Label $size={11} $w={74}>00:00:00.000</Label>
            <DarkBtn $w={39} $ml={0}>
              <Icon w={32} h={22}><path d="M-10 -1.500L-7 -5.500L-4 -1.500zM-10 1.500L-7 5.500L-4 1.500z" fill="#333" /><Note x={4.500} s={0.9} /></Icon>
            </DarkBtn>
            <Label $size={11} $ml={6} $w={13}>=</Label>
            <Box $w={52} $h={20} $pl={5}><Label $size={11}>120</Label></Box>
            <Spin $ml={2} $w={17} $h={22} />
            <DarkBtn $w={27} $ml={6}>
              <Icon w={24} h={22}><path d="M-9 -3H-6L-2 -7V5L-6 1H-9z" fill="#3a3a3a" /><path d="M0 -5C2 -3 2 0 0 2M2.500 -6C5 -3 5 0 3.500 1.500" stroke="#555" /><circle cx="5.500" cy="5" r="3.600" stroke="#8a8a8a" strokeWidth="2.400" /><circle cx="5.500" cy="5" r="5" stroke="#8a8a8a" strokeWidth="1.600" strokeDasharray="2 2" /></Icon>
            </DarkBtn>
          </PlayStrip>
        </Band>
      </Rebar>

      <Workspace>
        <Palette>
          <PaletteGrip />
          {PALETTE.map((art, i) => <PaletteCell key={i}><Icon w={24} h={24}>{art}</Icon></PaletteCell>)}
        </Palette>
        <DocColumn>
          <Canvas>
            <Paper><Score /></Paper>
          </Canvas>
          <BottomBar>
            {[1, 2, 3, 4].map((n) => <LayerBtn key={n} $on={n === 1}>{n}</LayerBtn>)}
            <Label $size={11} $ml={13} $w={37}>Page:</Label>
            <NavBtn>{tick('M1 0H2.500V9H1zM8 0V9L3 4.500z')}</NavBtn>
            <NavBtn>{tick('M7 0V9L2 4.500z')}</NavBtn>
            <Box $w={68} $h={18} $pl={5} $bc="#e3e3e3" $tc="#c9c9c9"><Label $size={11}>1</Label></Box>
            <NavBtn $ml={1}>{tick('M2 0V9L7 4.500z')}</NavBtn>
            <NavBtn $mr={7}>{tick('M6.500 0H8V9H6.500zM1 0V9L6 4.500z')}</NavBtn>
            <HScroll>
              <svg width="12" height="8"><path d="M10 1V7L6.500 4z" fill="#333" /></svg>
              <HThumb><svg width="8" height="7"><path d="M.5 0V7M3.500 0V7M6.500 0V7" stroke="#555" strokeWidth="1.200" /></svg></HThumb>
              <svg width="189" height="8"><path d="M181 1V7L185 4z" fill="#333" /></svg>
            </HScroll>
          </BottomBar>
        </DocColumn>
        <VScroll>
          <svg width="8" height="6"><path d="M1 5H7L4 1z" fill="#333" /></svg>
          <VThumb><svg width="7" height="8"><path d="M0 .5H7M0 3.500H7M0 6.500H7" stroke="#555" strokeWidth="1.200" /></svg></VThumb>
          <svg width="8" height="6"><path d="M1 1H7L4 5z" fill="#333" /></svg>
        </VScroll>
      </Workspace>

      <StatusBar>
        <Label $ls={-0.26}>SELECTION TOOL: Click an object to select it; Drag an object to move it; Double-click an object to go to its editing tool.</Label>
        <StatusCell><Label $ls={-0.4}>NUM</Label></StatusCell>
      </StatusBar>

      <Taskbar>
        <Task $w={54}><StartOrb /></Task>
        <Task $w={72}><IeIcon /></Task>
        <Task $w={49}><FolderIcon /></Task>
        <Task $w={71}><WmpIcon /></Task>
        <Task $w={58} $state="open"><ChromeIcon /></Task>
        <Task $w={66}><FirefoxIcon /></Task>
        <Task $w={58} $state="active"><FinaleLogo r={14.500} /></Task>
        <Tray>
          <Label $color="#fff" $size={12} $w={30} $mt={-4} $ls={-0.2}>ES</Label>
          <svg width="18" height="20"><path d="M0 13L4 9L8 13z" fill="#fff" /></svg>
          <Icon w={22} h={20}><path d="M-5.500 -6V7" stroke="#fff" strokeWidth="1.500" /><path d="M-4.500 -6C-2 -7 0 -6 1 -4C3 -3 5 -5 7.500 -4L6 1C4 2 2 1 1 -.5C-1 -1 -3 0 -4.500 0z" fill="#fff" /></Icon>
          <Icon w={26} h={20}><path d="M-5.500 -3.500H7.500V4.500H-3M-3 7.500H6M2 4.500V7.500M-6.500 -6.500V-3.500H-2.500V-6.500M-4.500 -3V7.500H-2" stroke="#fff" strokeWidth="1.200" /></Icon>
          <Icon w={22} h={20}><path d="M-7 -2H-4L-.5 -6V6L-4 2H-7z" fill="#fff" /><path d="M1.500 -2.500C2.500 -1 2.500 1 1.500 2.500M3.500 -4.500C5.500 -2 5.500 2 3.500 4.500" stroke="#fff" /></Icon>
          <Clock>
            <Label $color="#fff" $size={12} $ls={-0.45}>13:11</Label>
            <Label $color="#fff" $size={12} $ls={-0.45}>10/05/2018</Label>
          </Clock>
          <ShowDesktop />
        </Tray>
      </Taskbar>

      <Dialog>
        <Smudges />
        <DialogTitle><Label $ls={-0.28}>Score System Divider</Label></DialogTitle>
        <Client>
          <Row>
            <Group $w={105} $h={140} $pad="13px 0 0 11px">
              <Legend>Page Range</Legend>
              <Radio on>All</Radio>
              <Radio mt={10}>Current</Radio>
              <Radio mt={10}>Selected</Radio>
              <Row $align="center" $mt={10}>
                <NumField w={38} off>1</NumField>
                <Label $font={SANS} $size={11} $color="#a0a0a0" $ml={7} $mt={1}>to</Label>
              </Row>
              <NumField w={38} mt={6} off>1</NumField>
            </Group>
            <Group $w={212} $h={140} $ml={9} $pad="16px 0 0 8px">
              <Legend>Vertical</Legend>
              <Radio on ls={-0.13}>Between last/first staff lines</Radio>
              <Radio mt={7} ls={-0.22}>Between staff systems boundaries</Radio>
              <Column $mt={28}>
                <Label $font={SANS} $size={11} $ls={-0.3}>Adjustment:</Label>
                <NumField mt={6}>0</NumField>
              </Column>
            </Group>
          </Row>
          <Row $mt={19} $pl={2}>
            <Group $w={213} $h={95} $pad="18px 0 0 6px">
              <Legend $ls={-0.2}>Horizontal</Legend>
              <Row>
                <Column $w={122} $mt={2}>
                  <Check ls={-0.1}>Left side</Check>
                  <Label $font={SANS} $size={11} $ls={-0.3} $mt={13}>Adjustment:</Label>
                  <NumField mt={4}>-0.16</NumField>
                </Column>
                <Column>
                  <Check ls={-0.2}>Right side</Check>
                  <Label $font={SANS} $size={11} $ls={-0.3} $mt={15}>Adjustment:</Label>
                  <NumField mt={4} focus>0.16</NumField>
                </Column>
              </Row>
            </Group>
            <Column $ml={22} $mt={-11}>
              <Label $font={SANS} $size={11} $ml={2} $ls={-0.2}>Font size:</Label>
              <Combo>
                <Label $font={SANS} $size={12} $ls={-0.3}>14</Label>
                <svg width="8" height="5"><path d="M0 0H8L4 4.500z" fill="#000" /></svg>
              </Combo>
            </Column>
          </Row>
          <Row $mt={18} $pl={55}>
            <Button $primary><Label $font={SANS} $size={11.5} $ls={-0.8}>OK</Label></Button>
            <Button $ml={16}><Label $font={SANS} $size={11}>Cancel</Label></Button>
            <Button $ml={45}><Label $font={SANS} $size={11}>Remove</Label></Button>
          </Row>
        </Client>
      </Dialog>
    </Screen>
  );
}
